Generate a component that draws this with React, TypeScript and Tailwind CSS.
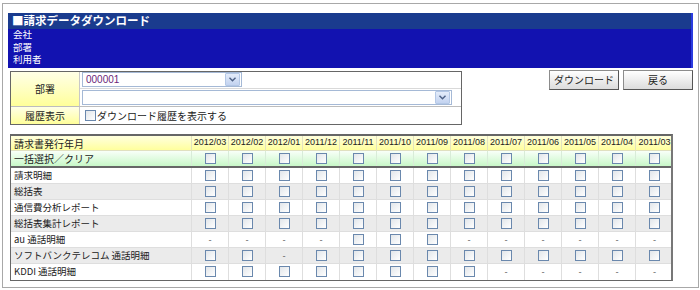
import React from "react";

const months = [
  "2012/03","2012/02","2012/01","2011/12","2011/11","2011/10","2011/09",
  "2011/08","2011/07","2011/06","2011/05","2011/04","2011/03",
];

const B = true;
const D = false;
const rows: { label: string; cells: boolean[] }[] = [
  { label: "請求明細", cells: Array(13).fill(B) },
  { label: "総括表", cells: Array(13).fill(B) },
  { label: "通信費分析レポート", cells: Array(13).fill(B) },
  { label: "総括表集計レポート", cells: Array(13).fill(B) },
  { label: "au 通話明細", cells: [D, D, D, D, B, B, B, D, D, D, D, D, D] },
  { label: "ソフトバンクテレコム 通話明細", cells: [B, B, D, B, B, B, B, B, B, B, B, B, B] },
  { label: "KDDI 通話明細", cells: [B, B, B, B, B, B, B, B, D, D, D, D, D] },
];

const jp = { fontFamily: '"Noto Sans CJK JP", "Noto Sans", sans-serif' };

function Box() {
  return (
    <span className="inline-block w-[11px] h-[11px] border border-[#6a88ad] bg-gradient-to-br from-[#e2e6ea] to-white" />
  );
}

function Chevron() {
  return (
    <span className="flex items-center justify-center w-[15px] h-[13px] border border-[#b4c8e6] bg-gradient-to-b from-[#e4ecfa] to-[#c3d3f0] rounded-[1px]">
      <svg width="7" height="5" viewBox="0 0 7 5">
        <path d="M0.5 0.8 L3.5 3.8 L6.5 0.8" stroke="#4d6185" strokeWidth="1.4" fill="none" />
      </svg>
    </span>
  );
}

export default function App() {
  return (
    <div className="w-[700px] h-[290px] bg-white pt-[3px] pl-[2px]" style={jp}>
      <div className="w-[697px] h-[285px] border border-[#a8a8a8] pt-[9px]">
        {/* header */}
        <div className="ml-[5px] w-[685px] bg-[#1212b0] border-r-2 border-[#2b3ce0] text-white">
          <div className="h-[16px] bg-[#1a3b8e] flex items-center pl-[4px] text-[11.5px] font-bold leading-none">
            ■請求データダウンロード
          </div>
          <div className="pl-[5px] pb-[2px] text-[9.5px] leading-[12.5px] -mt-[1px]">
            <div>会社</div>
            <div>部署</div>
            <div>利用者</div>
          </div>
        </div>

        {/* form + buttons */}
        <div className="flex ml-[7px] mt-[2px] items-start w-[683px]">
          <div className="mt-[1px] w-[452px] border border-[#666] text-[10px] text-[#222]">
            <div className="flex border-b border-[#bdbdbd]">
              <div className="w-[69px] h-[34px] border-r border-[#c8c8c8] bg-gradient-to-b from-[#ffffe6] to-[#ffff99] flex items-center justify-center">
                部署
              </div>
              <div className="flex-1 flex flex-col">
                <div className="h-[17px] flex items-center pl-[2px] border-b border-[#d9d9d9]">
                  <div className="w-[160px] h-[15px] border border-[#a5b9d6] flex items-center justify-between pl-[3px] pr-[1px] bg-white">
                    <span className="text-[#6b1f7a] text-[10px] leading-none" style={{ fontFamily: '"Liberation Sans", sans-serif' }}>000001</span>
                    <Chevron />
                  </div>
                </div>
                <div className="h-[17px] flex items-center pl-[2px]">
                  <div className="w-[370px] h-[15px] border border-[#a5b9d6] flex items-center justify-end pr-[1px] bg-white">
                    <Chevron />
                  </div>
                </div>
              </div>
            </div>
            <div className="flex">
              <div className="w-[69px] h-[17px] border-r border-[#c8c8c8] bg-gradient-to-b from-[#ffffe6] to-[#ffff99] flex items-center justify-center">
                履歴表示
              </div>
              <div className="flex-1 flex items-center pl-[5px] gap-[1px]">
                <Box />
                <span>ダウンロード履歴を表示する</span>
              </div>
            </div>
          </div>
          <div className="ml-auto flex gap-[4px]">
            <button className="w-[70px] h-[20px] border border-[#8c8c8c] border-b-[#555] border-r-[#555] bg-gradient-to-b from-white to-[#dcdcdc] text-[10px] text-[#222] leading-none">
              ダウンロード
            </button>
            <button className="w-[70px] h-[20px] border border-[#8c8c8c] border-b-[#555] border-r-[#555] bg-gradient-to-b from-white to-[#dcdcdc] text-[10px] text-[#222] leading-none">
              戻る
            </button>
          </div>
        </div>

        {/* table */}
        <div className="ml-[7px] mt-[9px] w-[663px] border border-[#666] border-t-2 border-r-2 border-r-[#777] text-[10px] text-[#222]">
          <div className="grid grid-cols-[181px_repeat(13,37px)] h-[15px] bg-gradient-to-b from-[#ffffdd] to-[#ffff9c] border-b border-[#e0e0c0]">
            <div className="pl-[3px] flex items-center border-r border-[#e3e3c0]">請求書発行年月</div>
            {months.map((m) => (
              <div key={m} className="flex items-center justify-center border-r border-[#e3e3c0] last:border-r-0 text-[9px] font-medium" style={{ fontFamily: '"Liberation Sans", sans-serif' }}>
                {m}
              </div>
            ))}
          </div>
          <div className="grid grid-cols-[181px_repeat(13,37px)] h-[17px] bg-gradient-to-b from-[#f8fff8] to-[#c8f8c8] border-b-2 border-[#666]">
            <div className="pl-[3px] flex items-center border-r border-[#d8ecd8]">一括選択／クリア</div>
            {months.map((m) => (
              <div key={m} className="flex items-center justify-center border-r border-[#d8ecd8] last:border-r-0">
                <Box />
              </div>
            ))}
          </div>
          {rows.map((r, i) => (
            <div
              key={r.label}
              className={`grid grid-cols-[181px_repeat(13,37px)] h-[16px] ${i % 2 === 1 ? "bg-[#ebebeb]" : "bg-white"} ${i < rows.length - 1 ? "border-b border-[#dedede]" : ""}`}
            >
              <div className="pl-[3px] flex items-center border-r border-[#dedede] text-[9.5px]">{r.label}</div>
              {r.cells.map((c, j) => (
                <div key={j} className="flex items-center justify-center border-r border-[#dedede] last:border-r-0">
                  {c ? <Box /> : <span className="text-[9px] text-[#555] leading-none">-</span>}
                </div>
              ))}
            </div>
          ))}
        </div>
      </div>
    </div>
  );
}
